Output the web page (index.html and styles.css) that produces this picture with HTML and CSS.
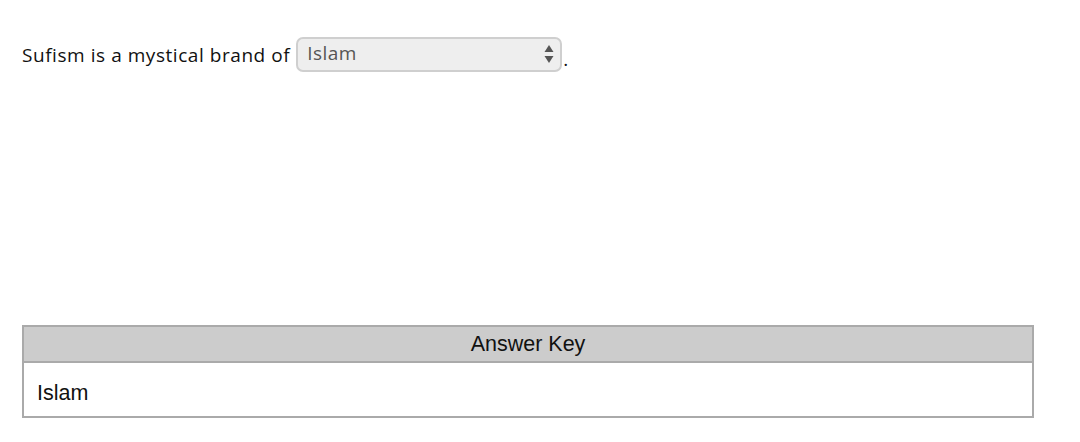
FILE: index.html
```html
<!DOCTYPE html>
<html lang="en">
<head>
    <meta charset="UTF-8">
    <title>Answer Key</title>
    <link rel="stylesheet" href="styles.css">
</head>
<body>
    <main class="page">
        <div class="question">
            <span class="prompt">Sufism is a mystical brand of</span>
            <span class="select-wrap">
                <select class="answer-select">
                    <option>Islam</option>
                    <option>Judaism</option>
                    <option>Hinduism</option>
                    <option>Buddhism</option>
                </select>
                <svg class="arrows" width="10" height="22" viewBox="0 0 10 22">
                    <path d="M5 2 L9.5 9 L0.5 9 Z" fill="#555"/>
                    <path d="M0.5 13 L9.5 13 L5 20 Z" fill="#555"/>
                </svg>
            </span>
            <span class="dot">.</span>
        </div>

        <table class="answer-key">
            <thead>
                <tr><th>Answer Key</th></tr>
            </thead>
            <tbody>
                <tr><td>Islam</td></tr>
            </tbody>
        </table>
    </main>
</body>
</html>
```

FILE: styles.css
```css
body {
    margin: 0;
    padding: 0;
    background-color: #fff;
    color: #111;
}

.page {
    padding: 37px 0 0 22px;
}

.question {
    display: flex;
    align-items: center;
    font-family: "Open Sans", "Lato", sans-serif;
    font-size: 19px;
    letter-spacing: 0.55px;
    font-variant-ligatures: none;
}

.prompt {
    margin-right: 6px;
}

.select-wrap {
    position: relative;
    display: inline-block;
}

.answer-select {
    -webkit-appearance: none;
    appearance: none;
    width: 266px;
    height: 35px;
    padding: 0 0 4px 9px;
    border: 2px solid #cfcfcf;
    border-radius: 7px;
    background-color: #eeeeee;
    color: #555;
    font-family: "Open Sans", "Lato", sans-serif;
    font-size: 19px;
    letter-spacing: 0.45px;
}

.arrows {
    position: absolute;
    right: 8px;
    top: 6px;
    pointer-events: none;
}

.dot {
    margin-left: 1px;
    margin-top: 8px;
}

.answer-key {
    margin-top: 253px;
    width: 1012px;
    border-collapse: collapse;
    border: 2px solid #aaa;
    font-family: "Liberation Sans", Arial, sans-serif;
    font-size: 21.5px;
    color: #111;
}

.answer-key th {
    height: 34px;
    padding: 0;
    background-color: #cccccc;
    border-bottom: 2px solid #aaa;
    font-weight: normal;
    text-align: center;
}

.answer-key td {
    height: 46px;
    padding: 7px 0 0 13px;
    text-align: left;
}
```
